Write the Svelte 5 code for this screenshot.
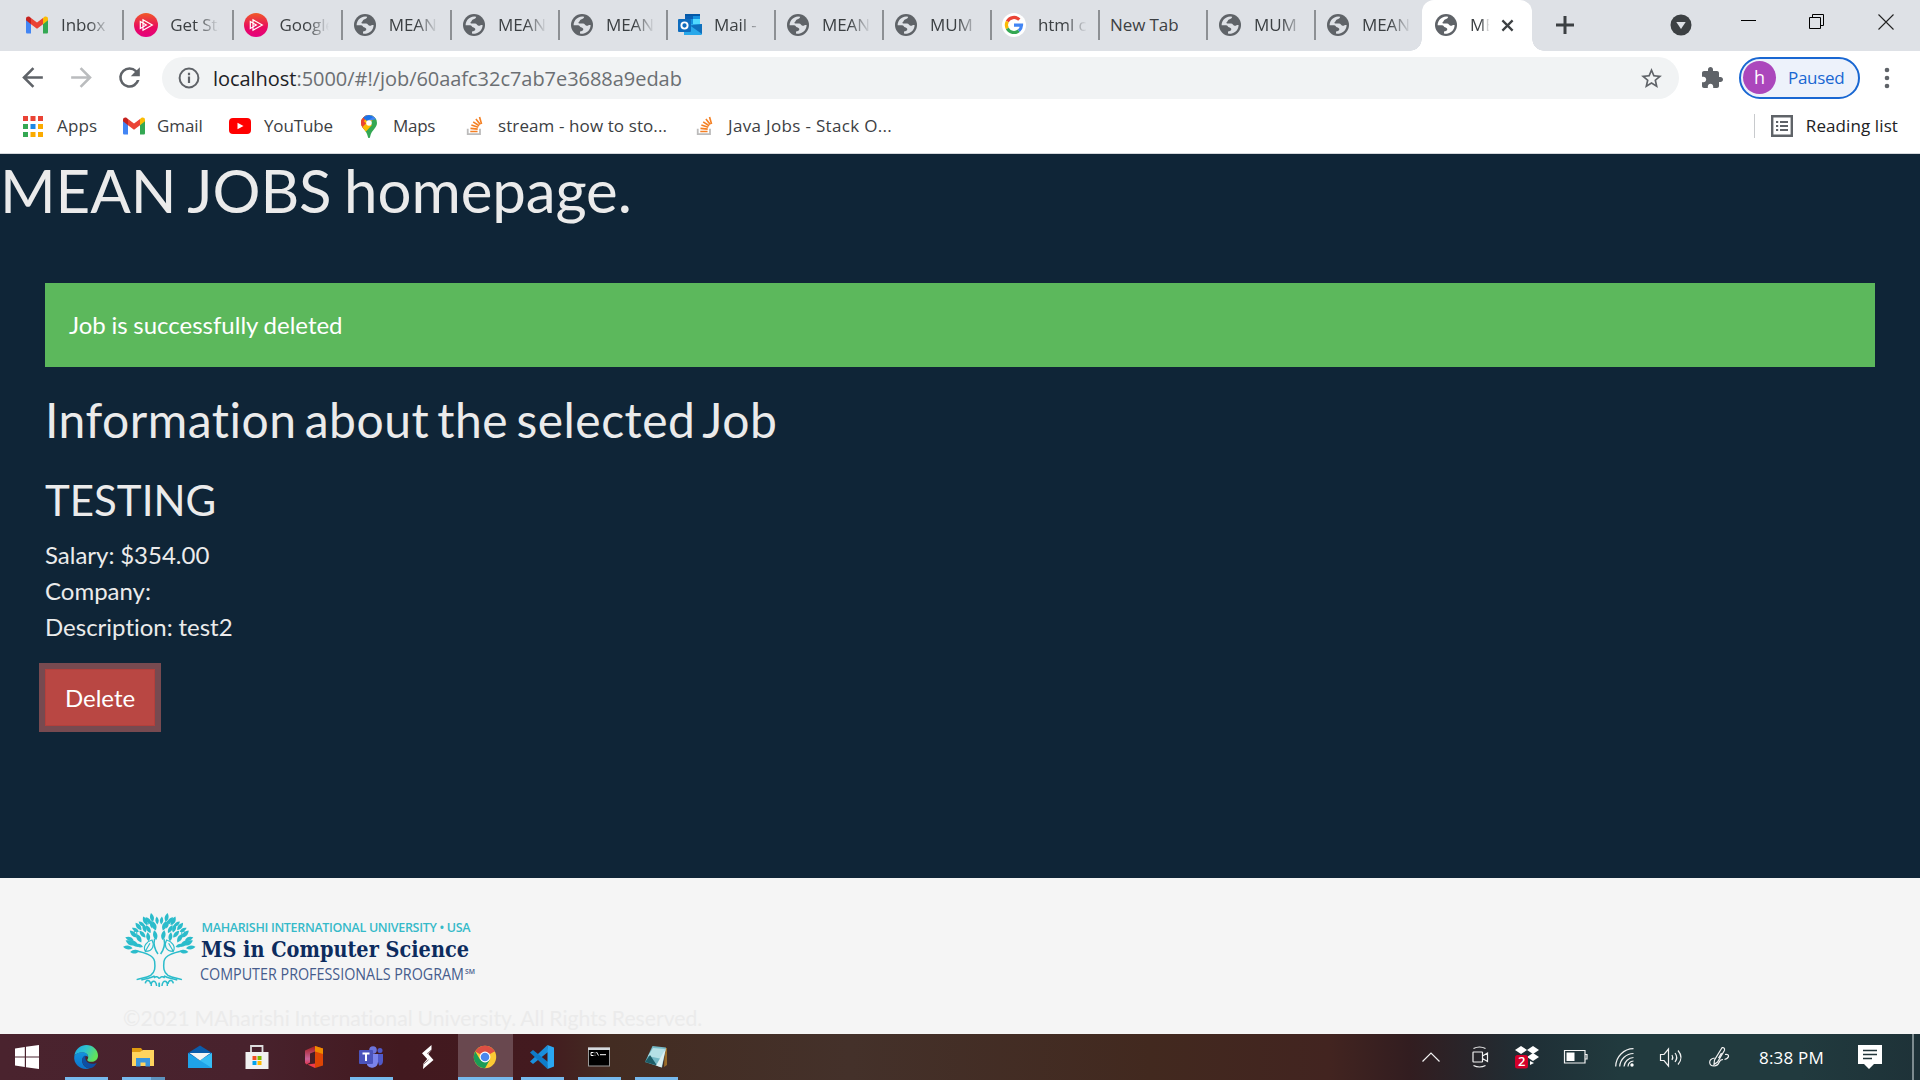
<script>
  const tabs = [
    { icon: 'gmail', title: 'Inbox (1)' },
    { icon: 'plural', title: 'Get Started' },
    { icon: 'plural', title: 'Google' },
    { icon: 'globe', title: 'MEAN' },
    { icon: 'globe', title: 'MEAN' },
    { icon: 'globe', title: 'MEAN' },
    { icon: 'outlook', title: 'Mail -' },
    { icon: 'globe', title: 'MEAN' },
    { icon: 'globe', title: 'MUM' },
    { icon: 'google', title: 'html co' },
    { icon: null, title: 'New Tab' },
    { icon: 'globe', title: 'MUM' },
    { icon: 'globe', title: 'MEAN' }
  ];

  const appColors = ['#ea4335', '#ea4335', '#ea4335', '#34a853', '#1e88e5', '#fbab00', '#34a853', '#fbab00', '#fbab00'];

  // Leaves of the tree emblem: base x, base y, rotation, scale
  const leaves = [
    [42, 132, -82, 0.95], [48, 122, -62, 1], [46, 108, -70, 0.9], [56, 98, -45, 1], [62, 82, -60, 0.8],
    [70, 76, -38, 0.95], [80, 66, -50, 0.8], [88, 60, -25, 0.95], [100, 58, -40, 0.9], [106, 50, -12, 0.9],
    [60, 126, -48, 1], [70, 112, -30, 1], [82, 98, -42, 0.9], [84, 82, -15, 0.9], [98, 84, -30, 0.9],
    [104, 70, -8, 0.8], [114, 76, -18, 1], [62, 142, -95, 0.9], [74, 128, -68, 0.8], [94, 108, -8, 0.9],
    [116, 104, -12, 1], [120, 58, -5, 0.8]
  ];
</script>

{#snippet globe()}
  <svg class="fav" viewBox="0 0 24 24">
    <circle cx="12" cy="12" r="11" fill="#5f6368" />
    <path class="land" d="M3.6 12.2A8.6 8.6 0 0 1 14.2 3.8C14 5.6 12.6 6 11 6.4C9.6 6.9 9.9 8.2 8.8 8.9C8 9.500 8.600 10.600 9.800 10.600H13C14.800 10.600 15 12.500 16.500 12.700C18.200 12.900 18.300 11.600 20.600 12A8.600 8.600 0 0 1 10 20.400V18.400C11.700 18.200 13.300 17.800 13.300 16.300C13.300 14.800 12 14.700 10.900 14.200C9.500 13.600 9.800 12.200 8 12.200Z" />
  </svg>
{/snippet}

{#snippet gmail()}
  <svg class="fav" viewBox="0 0 24 24">
    <path d="M1 6v13.200c0 .8.600 1.300 1.300 1.300H6V10.500z" fill="#4285f4" />
    <path d="M23 6v13.200c0 .8-.600 1.300-1.300 1.300H18V10.500z" fill="#34a853" />
    <path d="M18 5v6.200l5-3.900V6c0-2.200-2.300-3-3.800-1.900z" fill="#fbbc04" />
    <path d="M6 11.200V5l6 4.600L18 5v6.200l-6 4.600z" fill="#ea4335" />
    <path d="M1 6v1.300l5 3.900V5L4.800 4.100C3.300 3 1 3.800 1 6z" fill="#c5221f" />
  </svg>
{/snippet}

{#snippet stack()}
  <svg class="so" viewBox="0 0 18 22">
    <path d="M1 14v6h13.500v-6" fill="none" stroke="#bcbbbb" stroke-width="2" />
    <g stroke="#f48024" stroke-width="1.800">
      <path d="M3.800 17h8M4 13.600l8 .9M5 10l7.600 2.300M7 6.400l6.600 4.300M10 3.200l4.800 6.200M14 1.200l2.200 7.500" />
    </g>
  </svg>
{/snippet}

{#snippet favicon(name)}
  {#if name === 'globe'}
    {@render globe()}
  {:else if name === 'gmail'}
    {@render gmail()}
  {:else if name === 'plural'}
    <svg class="fav" viewBox="0 0 24 24">
      <defs>
        <linearGradient id="pl" x1="0" y1="0" x2="0" y2="1"><stop offset="0" stop-color="#f05a28" /><stop offset=".6" stop-color="#e80a5f" /><stop offset="1" stop-color="#e5007f" /></linearGradient>
      </defs>
      <circle cx="12" cy="12" r="12" fill="url(#pl)" />
      <path d="M9 6.800l9.300 5.200L9 17.200zM6.300 8.600l6 3.400-6 3.400z" fill="none" stroke="#fff" stroke-width="1.200" />
    </svg>
  {:else if name === 'outlook'}
    <svg class="fav" viewBox="0 0 24 24">
      <path d="M7 1h15v12H7z" fill="#1490df" />
      <path d="M7 1h8v5H7z" fill="#0a5fb4" /><path d="M15 6h7v5h-7z" fill="#50d9ff" /><path d="M15 1h7v2H7V1z" fill="#0358a7" />
      <path d="M6 11h18v9.500c0 1-.6 1.500-1.400 1.500H6z" fill="#28a8ea" />
      <path d="M24 11v10L12 12.500z" fill="#0f70bd" />
      <rect x="0" y="6" width="13" height="13" rx="1" fill="#0f6cbd" />
      <circle cx="6.500" cy="12.500" r="3.100" fill="none" stroke="#fff" stroke-width="1.900" />
    </svg>
  {:else if name === 'google'}
    <svg class="fav" viewBox="0 0 24 24">
      <circle cx="12" cy="12" r="12" fill="#fff" />
      <g fill="none" stroke-width="3.200">
        <path d="M5.300 8.500A7.500 7.500 0 0 1 17.300 6.700" stroke="#ea4335" />
        <path d="M5.300 8.500A7.500 7.500 0 0 0 5.300 15.500" stroke="#fbbc05" />
        <path d="M5.300 15.500A7.500 7.500 0 0 0 16.800 17.700" stroke="#34a853" />
        <path d="M12 12.200H19.500A7.500 7.500 0 0 1 16.800 17.700" stroke="#4285f4" />
      </g>
    </svg>
  {/if}
{/snippet}

<div class="screen">
  <header class="tabstrip">
    {#each tabs as tab, i}
      <div class="tab" class:wide={i < 4} class:first={i === 0}>
        {#if tab.icon}{@render favicon(tab.icon)}{/if}
        <span class="tab-title" class:faded={tab.icon}>{tab.title}</span>
      </div>
    {/each}
    <div class="tab active">
      {@render globe()}
      <span class="tab-title faded">MEAN</span>
      <svg class="close" viewBox="0 0 14 14"><path d="M1.500 1.500l11 11M12.500 1.500l-11 11" stroke="#3c4043" stroke-width="2.400" /></svg>
    </div>
    <svg class="plus" viewBox="0 0 18 18"><path d="M9 0v18M0 9h18" stroke="#3c4043" stroke-width="3" /></svg>
    <div class="window-controls">
      <svg class="search-tabs" viewBox="0 0 22 22"><circle cx="11" cy="11" r="10.500" fill="#3c4043" /><path d="M6.300 8h9.400L11 15z" fill="#dee1e6" /></svg>
      <svg class="min" viewBox="0 0 16 16"><path d="M0 6.500h15" stroke="#000" /></svg>
      <svg class="restore" viewBox="0 0 16 16"><path d="M.5 3.500h11v11H.5zM3.500 3.500v-3h11v11h-3" fill="none" stroke="#000" /></svg>
      <svg class="shut" viewBox="0 0 16 16"><path d="M.5.5l15 15M15.500.5l-15 15" stroke="#222" stroke-width="1.100" /></svg>
    </div>
  </header>

  <nav class="toolbar">
    <svg class="nav-icon" viewBox="0 0 24 24"><path d="M20 11H7.830l5.590-5.590L12 4l-8 8 8 8 1.410-1.410L7.830 13H20z" fill="#5f6368" /></svg>
    <svg class="nav-icon" viewBox="0 0 24 24"><path d="M4 11h12.170l-5.590-5.590L12 4l8 8-8 8-1.410-1.410L16.170 13H4z" fill="#babcbe" /></svg>
    <svg class="nav-icon last" viewBox="0 0 24 24"><path d="M17.650 6.350A7.960 7.960 0 0 0 12 4a8 8 0 1 0 7.730 10h-2.080A6 6 0 1 1 12 6c1.660 0 3.140.69 4.220 1.780L13 11h7V4z" fill="#5f6368" /></svg>
    <div class="omnibox">
      <svg class="info" viewBox="0 0 22 22"><circle cx="11" cy="11" r="9.400" fill="none" stroke="#5f6368" stroke-width="2" /><path d="M11 9.500v6.500M11 5.800v2.400" stroke="#5f6368" stroke-width="2.200" /></svg>
      <span class="url"><b>localhost</b>:5000/#!/job/60aafc32c7ab7e3688a9edab</span>
      <svg class="star" viewBox="0 0 24 24"><path d="M22 9.240l-7.190-.62L12 2 9.190 8.630 2 9.240l5.460 4.730L5.820 21 12 17.270 18.180 21l-1.630-7.030zM12 15.400l-3.760 2.270 1-4.280-3.320-2.880 4.380-.38L12 6.100l1.710 4.040 4.380.38-3.320 2.880 1 4.280z" fill="#5f6368" /></svg>
    </div>
    <svg class="puzzle" viewBox="0 0 24 24"><path d="M20.500 11H19V7c0-1.100-.9-2-2-2h-4V3.500C13 2.120 11.880 1 10.500 1S8 2.120 8 3.500V5H4c-1.100 0-1.990.9-1.990 2v3.800H3.500c1.490 0 2.700 1.210 2.700 2.700s-1.210 2.700-2.700 2.700H2V20c0 1.100.9 2 2 2h3.800v-1.500c0-1.490 1.210-2.700 2.700-2.700s2.700 1.210 2.700 2.700V22H17c1.100 0 2-.9 2-2v-4h1.500c1.380 0 2.500-1.120 2.500-2.500S21.880 11 20.500 11z" fill="#5f6368" /></svg>
    <div class="profile"><span class="avatar">h</span><span class="paused">Paused</span></div>
    <svg class="dots" viewBox="0 0 6 22"><g fill="#5f6368"><circle cx="3" cy="3" r="2.300" /><circle cx="3" cy="11" r="2.300" /><circle cx="3" cy="19" r="2.300" /></g></svg>
  </nav>

  <nav class="bookmarks">
    <div class="mark apps">
      <svg class="grid" viewBox="0 0 20 21">
        {#each appColors as color, i}
          <rect x={(i % 3) * 7.500} y={Math.floor(i / 3) * 8} width="5" height="5" fill={color} />
        {/each}
      </svg>
      <span>Apps</span>
    </div>
    <div class="mark gm">{@render gmail()}<span>Gmail</span></div>
    <div class="mark yt">
      <svg class="tube" viewBox="0 0 22 16"><rect width="22" height="16" rx="4" fill="#f00" /><path d="M8.500 4.800l6 3.200-6 3.200z" fill="#fff" /></svg>
      <span>YouTube</span>
    </div>
    <div class="mark mp">
      <svg class="pin" viewBox="0 0 16 23">
        <clipPath id="pinshape"><path d="M8 0a8 8 0 0 1 8 8c0 5-5.500 7-6.800 13.500C9 22.500 8.600 23 8 23s-1-.5-1.200-1.500C5.500 15 0 13 0 8a8 8 0 0 1 8-8z" /></clipPath>
        <g clip-path="url(#pinshape)">
          <path d="M0 0h16v23H0z" fill="#34a853" /><path d="M0 18L16 0H0z" fill="#fbbc04" /><path d="M0 9.500L8 0H0z" fill="#ea4335" /><path d="M2 0l5 6 9-2V0z" fill="#4285f4" /><path d="M0 4l6 5-4 5-2-3z" fill="#ea4335" /><path d="M1.500 12l4-4 5.500 2-6.500 7z" fill="#fbbc04" /><path d="M2 2.500L6 6l6-4L8 0z" fill="#1a73e8" />
        </g>
        <circle cx="8" cy="8" r="2.800" fill="#fff" />
      </svg>
      <span>Maps</span>
    </div>
    <div class="mark so1">{@render stack()}<span>stream - how to sto...</span></div>
    <div class="mark so2">{@render stack()}<span>Java Jobs - Stack O...</span></div>
    <div class="reading">
      <svg class="list" viewBox="0 0 22 22"><path d="M1.200 1.200h19.600v19.600H1.200z" fill="none" stroke="#5f6368" stroke-width="2.400" /><path d="M5 7h2.200M5 11h2.200M5 15h2.200M9 7h8M9 11h8M9 15h8" stroke="#5f6368" stroke-width="2" /></svg>
      <span>Reading list</span>
    </div>
  </nav>

  <main>
    <h1>MEAN JOBS homepage.</h1>
    <section class="job">
      <div class="alert">Job is successfully deleted</div>
      <h2>Information about the selected Job</h2>
      <h3>TESTING</h3>
      <div>Salary: $354.00</div>
      <div>Company:</div>
      <div>Description: test2</div>
      <button>Delete</button>
    </section>
  </main>

  <footer>
    <svg class="logo" viewBox="0 0 360 90">
      <g transform="translate(-.7 0) scale(.3333)" stroke="#2bbccb" fill="none" stroke-width="4.500">
        {#each [1, -1] as side}
          <g transform={side === 1 ? '' : 'translate(252 0) scale(-1 1)'}>
            {#each leaves as [x, y, r, s]}
              <path d="M0 4C-9 -6 -8 -16 0 -26C8 -16 9 -6 0 4z" fill="#2bbccb" stroke="none" transform="translate({x} {y}) rotate({r}) scale({s})" />
            {/each}
            <path d="M54 140C80 146 108 152 112 172C114 190 114 204 100 214C86 222 74 222 58 227" />
            <path d="M84 142C76 128 88 112 104 108C112 122 108 142 84 142zM84 142L98 118" stroke-width="3.500" />
            <path d="M122 150C112 136 108 120 112 104" />
            <path d="M72 228C90 222 100 224 112 216M84 238C86 226 98 226 100 240M102 246C100 230 116 224 118 246M110 222C116 216 122 218 126 224M126 248V236" stroke-width="4.500" />
            <circle cx="92" cy="54" r="6" stroke-width="3" /><circle cx="54" cy="87" r="5" stroke-width="3" />
          </g>
        {/each}
      </g>
      <text class="l1" x="83.500" y="27.800" textLength="269">MAHARISHI INTERNATIONAL UNIVERSITY • USA</text>
      <text class="l2" x="83" y="53" textLength="268" lengthAdjust="spacingAndGlyphs">MS in Computer Science</text>
      <text class="l3" x="82" y="75.500" textLength="264" lengthAdjust="spacingAndGlyphs">COMPUTER PROFESSIONALS PROGRAM</text>
      <text class="sm" x="347" y="69.500" textLength="10" lengthAdjust="spacingAndGlyphs">SM</text>
    </svg>
    <p>©2021 MAharishi International University. All Rights Reserved.</p>
  </footer>

  <div class="taskbar">
    <div class="launchers">
      <div class="app start"><svg viewBox="0 0 24 24"><path d="M0 3.400L9.800 2v9.500H0zM11 1.800L24 0v11.500H11zM0 12.600h9.800V22L0 20.600zM11 12.600h13V24l-13-1.800z" fill="#fff" /></svg></div>
      <div class="app open">
        <svg viewBox="0 0 24 24">
          <defs>
            <linearGradient id="e1" x1="0" y1="0" x2="1" y2=".4"><stop offset="0" stop-color="#1ba8e6" /><stop offset=".5" stop-color="#2fc3cf" /><stop offset="1" stop-color="#62e25a" /></linearGradient>
            <linearGradient id="e2" x1="0" y1="0" x2="0" y2="1"><stop offset="0" stop-color="#1392dd" /><stop offset="1" stop-color="#0c74cc" /></linearGradient>
          </defs>
          <path d="M.3 11C1.500 3.500 7 0 12.300 0 19 0 24 5 24 10.500c0 4-3 6.300-6.500 6.300-3 0-4.300-1-4.300-1.800 0-.6 1-1.200 1-3 0-2.300-2.200-4.500-5.700-4.500C4.500 7.500 1.500 9 .3 11z" fill="url(#e1)" />
          <path d="M.3 11C1.500 9 4.500 7.300 8.500 7.300c3 0 5.700 2 5.700 4.700-1.500-2-5.700-1.500-6 3-.2 4.500 3 8.500 7.800 8.200C8 26-1 20 .3 11z" fill="url(#e2)" />
          <path d="M8.200 15c.1-3 1.800-4.300 3.500-4.500-1.500 4 1.500 8.500 7 8.300 2 0 3.500-1 4-.8C21.500 20.500 19 23 16 23.300 11.500 23.500 8 19.500 8.200 15z" fill="#0d4fa3" />
        </svg>
      </div>
      <div class="app open multi">
        <svg viewBox="0 0 24 24"><path d="M1 3h9l1.500 2v3H1z" fill="#e09b10" /><path d="M1 7h8l3-2h11v16H1z" fill="#ffd45e" /><path d="M5 13h14v8.500h-4.500V17.500h-5v4H5z" fill="#3a96dd" /></svg>
      </div>
      <div class="app"><svg viewBox="0 0 24 24"><path d="M0 8L12 .5 24 8v6H0z" fill="#0b5cab" /><path d="M0 8l12 7.500L24 8v15H0z" fill="#1fa2e8" /><path d="M24 8v15L12 15.500z" fill="#37bdf5" /><path d="M1.500 8h21L12 15.500z" fill="#f5f5f5" /></svg></div>
      <div class="app"><svg viewBox="0 0 24 24"><path d="M6 7V1h11.500v6" fill="none" stroke="#ddd" stroke-width="1.800" /><path d="M.5 7h23v17H.5z" fill="#f1f1f1" /><path d="M7.500 11h4v4h-4z" fill="#f25022" /><path d="M12.500 11h4v4h-4z" fill="#7fba00" /><path d="M7.500 16h4v4h-4z" fill="#00a4ef" /><path d="M12.500 16h4v4h-4z" fill="#ffb900" /></svg></div>
      <div class="app">
        <svg viewBox="0 0 24 24">
          <defs><linearGradient id="of" x1="0" y1="0" x2="0" y2="1"><stop offset="0" stop-color="#a51c1c" /><stop offset=".7" stop-color="#c9649a" /><stop offset="1" stop-color="#e0314a" /></linearGradient></defs>
          <path d="M3 5.500L13 1v5.500L8 8.500v9L4.500 19.500 3 18z" fill="url(#of)" />
          <path d="M13 1l8 2.500v17L13 23z" fill="#dd4505" /><path d="M13 1l8 2.500V9l-8-2.500z" fill="#f08a00" />
          <path d="M5.500 19.500l7.500-1V23z" fill="#ef3b4b" />
        </svg>
      </div>
      <div class="app open"><svg viewBox="0 0 24 24"><circle cx="14" cy="5" r="3.800" fill="#6c74dd" /><circle cx="21" cy="5.500" r="2.500" fill="#5059c9" /><path d="M17 9h7v7c0 3-2 4.500-4 4.500z" fill="#5059c9" /><path d="M8 9h11v8a6 6 0 0 1-11 3z" fill="#7b83eb" /><rect y="5" width="14" height="14" rx="1" fill="#4b53bc" /><path d="M3.500 8.500h7M7 8.500V16" stroke="#fff" stroke-width="2" /></svg></div>
      <div class="app"><svg viewBox="0 0 24 24"><path d="M15.500 0L6 8.300l5.200 5.700L7.500 18.500 7 24l10.500-9-5.300-6L15.500 5z" fill="#fff" /><path d="M15.500 4.800l-4.500 4M8 18.800l4.500-4" stroke="#42191f" stroke-width=".6" /></svg></div>
      <div class="app open current"><svg viewBox="0 0 24 24"><circle cx="12" cy="12" r="11.200" fill="#fbc934" /><path d="M12 12L2.300 6.400a11.200 11.200 0 0 1 19.400 0L20.500 7z" fill="#dd4f43" /><path d="M2.300 6.400a11.200 11.200 0 0 0 9.700 16.800l4.800-8.500L7 14.500z" fill="#1a9c56" /><path d="M12 6.500h9.800l-1-1.500L12 4z" fill="#dd4f43" /><circle cx="12" cy="12" r="5.400" fill="#fff" /><circle cx="12" cy="12" r="4.300" fill="#4a87ee" /></svg></div>
      <div class="app open"><svg viewBox="0 0 24 24"><path d="M17.500 0L18 7 3 19 0 16.500z" fill="#1a8fdc" /><path d="M17.500 24L18 17 3 5 0 7.500z" fill="#0f7cc9" /><path d="M17.500 0L24 2.500v19L17.500 24z" fill="#2aa7f3" /></svg></div>
      <div class="app open"><svg viewBox="0 0 24 24"><path d="M1 2.500h22v19H1z" fill="#999" /><path d="M2 5h20v15.500H2z" fill="#000" /><path d="M1 2.500h22V5H1z" fill="#d5d9dd" /><path d="M6.500 7.500H4v3h2.500M8 7.500v.8M8 9.800v.7M9.500 7l2 3.500M13 9.700h6" stroke="#fff" fill="none" /></svg></div>
      <div class="app open"><svg viewBox="0 0 24 24"><path d="M21 3h2v17l-3 2z" fill="#9a6b28" /><path d="M8.500 1L22 2.500 18 22.500 1 17z" fill="#75b9c6" /><path d="M9 3l12 1-3 10L4 11z" fill="#b5e0e6" /><path d="M1 17L6 10l7 10.500z" fill="#1d5d68" /><path d="M22 3l-4.500 19.500L12 20.500z" fill="#dceff1" /></svg></div>
    </div>
    <div class="tray">
      <svg class="t-caret" viewBox="0 0 18 10"><path d="M.5 9.500L9 1l8.500 8.500" /></svg>
      <svg class="t-cam" viewBox="0 0 16 22"><path d="M1 6.500q0-.5.5-.5h8.500q.5 0 .5.500v9q0 .5-.5.5H1.500q-.5 0-.5-.5zM10.500 10l5-3v8.500l-5-3M1.500 2.500q6-3 12 0M1.500 19.500q6 3 12 0" /></svg>
      <svg class="t-drop" viewBox="0 0 24 24"><path d="M6 1l6 4-6 4-6-4zM18 1l6 4-6 4-6-4zM18 8l6 4-6 4-6-4zM15 16l4 2-4 2z" class="solid" /><rect x="0" y="10" width="13" height="13.500" rx="2.500" class="badge" /><text x="3" y="21">2</text></svg>
      <svg class="t-batt" viewBox="0 0 24 14"><path d="M.5.500h20.500v12.500H.5zM21 4.500h2v4.500h-2" /><path d="M2.500 2.500h8v8.500h-8z" class="solid" /></svg>
      <svg class="t-wifi" viewBox="0 0 19 19"><path d="M.7 18.500A18 18 0 0 1 18.500.700M4.700 18.500A14 14 0 0 1 18.500 5.500M9 18.500A10 10 0 0 1 18.500 9.500M13 18.500A6 6 0 0 1 18.500 13" /><circle cx="17" cy="17" r="1.700" class="solid" /></svg>
      <svg class="t-vol" viewBox="0 0 23 19"><path d="M.5 6.500h3.500L8.500 1v17L4 12.500H.5zM12 7q1.500 2.500 0 5M15 5q3.500 4.500 0 9M18 2.500q6 7 0 14" /></svg>
      <svg class="t-pen" viewBox="0 0 20 20"><path d="M13 .7q3-.5 2.500 2.500L8.500 15 5 17.500 5.500 13zM5.500 11Q.5 12 .7 15.500t4.300 3.500q4-.5 5-3.500T14 12.500M16 7.500q4-.5 3.500 2-.5 2-4 3M9.500 11l3-5" /></svg>
      <span class="clock">8:38 PM</span>
      <svg class="t-note" viewBox="0 0 24 24"><path d="M0 0h24v19h-8l-5 5-5-5H0z" class="solid" /><path d="M5 5.500h14M5 9.500h14M5 13.500h9" class="dark" /></svg>
      <i class="peek"></i>
    </div>
  </div>
</div>

<style>
  :global(body) { margin: 0; overflow: hidden; }
  .screen { width: 1920px; height: 1080px; display: flex; flex-direction: column; font-family: "Open Sans", "Noto Sans", sans-serif; color: #3c4043; font-size: 17px; overflow: hidden; }
  .screen * { box-sizing: border-box; }
  svg { display: block; flex: none; overflow: visible; }

  .tabstrip { height: 51px; flex: none; background: #dee1e6; display: flex; align-items: center; padding: 0 0 1px 13px; }
  .tab { width: 108px; height: 30px; display: flex; align-items: center; gap: 12px; border-left: 2px solid #8d9094; padding-left: 10px; flex: none; }
  .tab.wide { width: 109.250px; }
  .tab.first { border-left-color: transparent; }
  .fav { width: 24px; height: 24px; }
  .land { fill: #dee1e6; }
  .tab-title { white-space: nowrap; overflow: hidden; line-height: 28px; letter-spacing: -.1px; }
  .tab-title.faded { width: 50px; mask-image: linear-gradient(90deg, #000 55%, transparent 98%); }
  .tab.active { position: relative; width: 110px; height: 51px; margin-bottom: -1px; padding-bottom: 1px; border: 0; background: #fff; border-radius: 12px 12px 0 0; padding-left: 12px; }
  .tab.active::before, .tab.active::after { content: ""; position: absolute; bottom: 0; width: 12px; height: 12px; }
  .tab.active::before { left: -12px; background: radial-gradient(circle at 0 0, transparent 11.500px, #fff 12px); }
  .tab.active::after { right: -12px; background: radial-gradient(circle at 100% 0, transparent 11.500px, #fff 12px); }
  .tab.active .tab-title { width: 20px; }
  .tab.active .land { fill: #fff; }
  .tab.active .close { width: 13px; height: 13px; margin-left: -1px; }
  .plus { width: 18px; height: 18px; margin-left: 24px; }
  .window-controls { margin-left: auto; display: flex; align-items: flex-start; padding: 0 26px 0 0; height: 22px; }
  .search-tabs { width: 22px; height: 22px; margin-right: 49px; }
  .min, .restore, .shut { width: 16px; height: 16px; }
  .min { margin-right: 52px; }
  .restore { margin-right: 53px; }

  .toolbar { height: 54px; flex: none; background: #fff; display: flex; align-items: center; padding-left: 17px; }
  .nav-icon { width: 31px; height: 31px; margin: 0 17.500px 1px 0; }
  .nav-icon.last { margin-right: 17px; }
  .omnibox { width: 1517px; height: 42px; border-radius: 21px; background: #f1f3f4; display: flex; align-items: center; padding: 0 15px 0 16px; }
  .info { width: 22px; height: 22px; }
  .url { margin-left: 13px; font-size: 20px; color: #6b6f73; letter-spacing: -.04px; }
  .url b { font-weight: 400; color: #202124; }
  .star { width: 25px; height: 25px; margin-left: auto; }
  .puzzle { width: 24px; height: 24px; margin-left: 21px; }
  .profile { width: 121px; height: 42px; margin-left: 15px; border: 2px solid #1967d2; border-radius: 21px; background: #edf2fb; display: flex; align-items: center; padding: 0 0 1px 2px; }
  .avatar { width: 33px; height: 33px; border-radius: 50%; background: #ab47bc; color: #fff; text-align: center; line-height: 32px; font-size: 18px; }
  .paused { color: #1967d2; margin-left: 12px; letter-spacing: -.3px; }
  .dots { width: 6px; height: 22px; margin-left: 24px; }

  .bookmarks { height: 49px; flex: none; background: #fff; border-bottom: 1px solid #d5d8dc; display: flex; align-items: center; padding: 0 22px 6px 23px; letter-spacing: -.3px; }
  .bookmarks span { padding-bottom: 2px; }
  .mark { display: flex; align-items: center; white-space: nowrap; flex: none; }
  .grid { width: 20px; height: 21px; margin-right: 14px; }
  .apps { width: 99px; letter-spacing: .15px; }
  .gm { width: 107px; letter-spacing: -.1px; }
  .gm :global(svg) { margin-right: 11px; }
  .yt { width: 132px; letter-spacing: -.15px; }
  .tube { width: 22px; height: 16px; margin-right: 13px; }
  .mp { width: 105px; }
  .pin { width: 16px; height: 23px; margin-right: 16px; }
  .so { width: 18px; height: 20px; margin-right: 14px; }
  .so1 { width: 230px; letter-spacing: .1px; }
  .so2 { letter-spacing: .33px; }
  .reading { margin-left: auto; display: flex; align-items: center; height: 24px; border-left: 1px solid #c8cacd; padding-left: 16px; gap: 13px; color: #202124; letter-spacing: .1px; }
  .list { width: 22px; height: 22px; }

  main { height: 724px; flex: none; background: #0f2537; color: #ebebeb; font-family: Lato, sans-serif; font-size: 24px; line-height: 36px; font-variant-ligatures: none; word-spacing: -.02em; }
  h1, h2, h3, p { margin: 0; font-weight: 400; line-height: 1.2; }
  h1 { font-size: 60px; word-spacing: -.045em; letter-spacing: -.1px; }
  .job { padding: 57px 45px 0; }
  .alert { background: #5cb85c; color: #fff; padding: 24px; margin-bottom: 24px; }
  h2 { font-size: 48px; margin-bottom: 26px; word-spacing: -.095em; letter-spacing: .5px; }
  h3 { font-size: 42px; margin-bottom: 12px; }
  button { display: block; width: 110px; height: 57px; margin-top: 24px; padding: 1px 0 0 0; border: 1.500px solid #b3403c; background: #b94743; box-shadow: 0 0 0 6px #774a50; color: #fff; font: 24px/36px Lato, sans-serif; }

  footer { height: 156px; flex: none; background: #f5f5f5; padding: 26px 0 0 118px; }
  .logo { width: 360px; height: 90px; }
  .l1 { font: 600 12.500px "Open Sans", sans-serif; fill: #35bac9; }
  .l2 { font: 700 22px "DejaVu Serif", serif; fill: #0d2c5e; }
  .l3 { font: 400 15.500px "Open Sans", sans-serif; fill: #465c8c; }
  .sm { font: 600 7px "Open Sans", sans-serif; fill: #465c8c; }
  footer p { padding: 12px 0 0 5px; font: 21.200px/24px Lato, sans-serif; color: #ebebeb; font-variant-ligatures: none; word-spacing: -.03em; white-space: nowrap; }

  .taskbar { height: 46px; flex: none; display: flex; justify-content: space-between; background: linear-gradient(90deg, #4a232e 0, #48222d 250px, #42191f 400px, #431a1f 540px, #432c22 610px, #44312a 850px, #42291f 1150px, #422420 1330px, #321d20 1410px, #28252a 1470px, #1f2f36 1530px, #213a3e 1620px, #213a3e 1800px, #1e3238 1920px); }
  .launchers { display: flex; padding-left: 5px; gap: 14px; }
  .app { width: 43px; height: 46px; display: flex; align-items: center; justify-content: center; flex: none; }
  .app.start { width: 46px; padding-right: 2px; }
  .app svg { width: 24px; height: 24px; margin-right: 1px; }
  .app.open { box-shadow: inset 0 -3px #76b9ed; }
  .app.multi { box-shadow: none; background: linear-gradient(90deg, #76b9ed 29px, #5d92bd 29px) bottom / 100% 3px no-repeat; }
  .app.current { width: 55px; margin: 0 -6px; background: #69484f; }
  .tray { display: flex; align-items: center; }
  .tray path { fill: none; stroke: #f2f2f2; stroke-width: 1.200; }
  .tray .solid { fill: #fff; stroke: none; }
  .tray .dark { stroke: #21343a; stroke-width: 1.400; }
  .badge { fill: #d4002a; }
  .tray text { font: 600 13px "Open Sans", sans-serif; fill: #fff; }
  .t-caret { width: 18px; height: 10px; margin-right: 32px; }
  .t-cam { width: 16px; height: 22px; margin-right: 27px; }
  .t-drop { width: 24px; height: 24px; margin-right: 25px; }
  .t-batt { width: 24px; height: 14px; margin-right: 27px; }
  .t-wifi { width: 19px; height: 19px; margin-right: 26px; }
  .t-vol { width: 23px; height: 19px; margin-right: 26px; }
  .t-pen { width: 20px; height: 20px; margin-right: 30px; }
  .clock { color: #fff; width: 99px; letter-spacing: .2px; white-space: nowrap; }
  .t-note { width: 24px; height: 24px; margin-right: 30px; }
  .peek { width: 2px; height: 46px; background: #7d8b8f; margin-right: 6px; }
</style>
